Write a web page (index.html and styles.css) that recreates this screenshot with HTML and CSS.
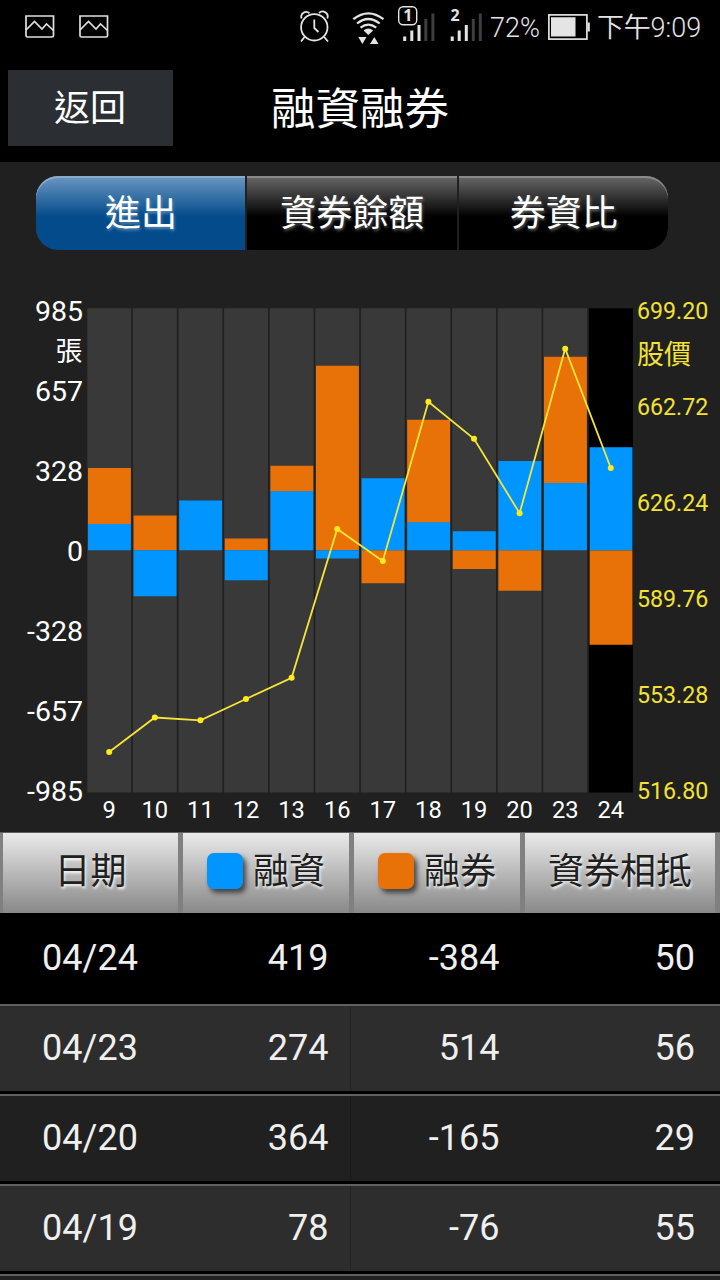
FILE: index.html
```html
<!DOCTYPE html>
<html lang="zh-Hant">
<head>
<meta charset="utf-8">
<title>融資融券</title>
<link rel="stylesheet" href="styles.css">
</head>
<body>
<div class="screen">
  <div class="status">
    <svg class="pics" width="84" height="26" viewBox="0 0 84 26" fill="none" stroke="#e0e0e0" stroke-width="1.700">
      <g id="pic"><path d="M1 1H28.500V20.500Q28.500 22 27 22H2.500Q1 22 1 20.500Z"/><path d="M1 15L9.500 6.500L17 14L21.500 9L28.500 15.500"/></g>
      <use href="#pic" x="54"/>
    </svg>
    <svg class="signals" width="186" height="54" viewBox="298 0 186 54">
      <g fill="none" stroke="#e4e4e4" stroke-width="1.800">
        <circle cx="314.300" cy="27.300" r="13.200"/>
        <path d="M314.300 19.500V28L318.500 32M304.500 37L301 41.500M324.200 37L328 41.500"/>
        <path d="M301.500 18.500A5 5 0 0 1 309.500 13.200M327.300 18.500A5 5 0 0 0 319 13.200" />
        <g stroke-width="2.200"><path d="M353.300 19.200Q368.300 7.400 383.500 19.200M357 23.500Q368.300 14.500 379.700 23.500M360.500 27.700Q368.300 21.500 376.200 27.700"/></g>
        <rect x="398.700" y="6.700" width="18" height="18" rx="4.500" stroke-width="1.400"/>
      </g>
      <g fill="#e4e4e4">
        <path d="M363.500 30.500Q368.300 26.500 373.200 30.500L368.300 35ZM358.300 37H366.500L362.400 44ZM370 44H378.500L374.300 37Z"/>
        <path d="M403.200 36.500h3v4.500h-3zM410.300 30.500h3V41h-3zM417.500 25h3V41h-3zM450.700 36.500h3v4.500h-3zM457.700 30.500h3V41h-3zM464.800 25h3V41h-3z"/>
        <path fill="#3e3e3e" d="M424.300 19h3V41h-3zM431.400 13.500h3V41h-3zM471.800 19h3V41h-3zM478.800 13.500h3V41h-3z"/>
        <text class="sim" x="407.800" y="21">1</text>
        <text class="sim" x="455" y="21">2</text>
      </g>
    </svg>
    <span class="percent">72%</span>
    <svg class="battery" width="42" height="26" viewBox="0 0 42 26"><rect x=".9" y=".9" width="38" height="24.200" fill="none" stroke="#e4e4e4" stroke-width="1.700"/><path d="M3 3.200H27.500V22.500H3ZM39.500 8.500h2.300v9h-2.300z" fill="#e4e4e4"/></svg>
    <span class="clock"><span class="ampm">下午</span>9:09</span>
  </div>

  <div class="titlebar">
    <div class="back">返回</div>
    <div class="title">融資融券</div>
  </div>

  <div class="tabs">
    <div class="tab active">進出</div>
    <div class="tab">資券餘額</div>
    <div class="tab">券資比</div>
  </div>

  <svg class="chart" width="720" height="582" viewBox="0 250 720 582">
    <g fill="#393939">
      <path d="M87.300 308.300h43.900V792.500h-43.900zM132.900 308.300h43.900V792.500h-43.900zM178.500 308.300h43.900V792.500h-43.900zM224.100 308.300h43.900V792.500h-43.900zM269.700 308.300h43.900V792.500h-43.900zM315.300 308.300h43.900V792.500h-43.900zM360.900 308.300h43.900V792.500h-43.900zM406.500 308.300h43.900V792.500h-43.900zM452.100 308.300h43.900V792.500h-43.900zM497.700 308.300h43.900V792.500h-43.900zM543.300 308.300h43.900V792.500h-43.900z"/>
      <rect x="588.900" y="308.300" width="44" height="484.200" fill="#000"/>
    </g>
    <g fill="#e87208">
      <path d="M88 468h42.900v56h-42.900zM133.600 515.500h42.900v34.800h-42.900zM224.800 538.500h42.900v11.800h-42.900zM270.400 465.800h42.900v26h-42.900zM316 365.700h42.900v184.600h-42.900zM361.600 550.300h42.900v33h-42.900zM407.200 419.700h42.900v103h-42.900zM452.800 550.300h42.900v18.700h-42.900zM498.400 550.300h42.900v40.500h-42.900zM544 356.700h42.900v127h-42.900zM589.600 550.300h42.900v94.400h-42.900z"/>
    </g>
    <g fill="#0196ff">
      <path d="M88 523.900h42.900v26.400h-42.900zM133.600 550.300h42.900v46h-42.900zM179.200 500.600h42.900v49.700h-42.900zM224.800 550.300h42.900v30h-42.900zM270.400 491.200h42.900v59.100h-42.900zM316 550.300h42.900v8.200h-42.900zM361.600 478.200h42.900v72.100h-42.900zM407.200 522.300h42.900v28h-42.900zM452.800 531.200h42.900v19.100h-42.900zM498.400 460.900h42.900v89.400h-42.900zM544 483h42.900v67.300h-42.900zM589.600 447.300h42.900v103h-42.900z"/>
    </g>
    <path class="price" d="M109.200 752L154.800 717.500L200.400 720.300L246 699L291.600 677.800L337.200 529L382.800 561L428.400 401.700L474 438.800L519.600 513.200L565.200 348.700L610.800 468"/>
    <g fill="#ffea1c">
      <circle cx="109.200" cy="752" r="3"/><circle cx="154.800" cy="717.500" r="3"/><circle cx="200.400" cy="720.300" r="3"/><circle cx="246" cy="699" r="3"/><circle cx="291.600" cy="677.800" r="3"/><circle cx="337.200" cy="529" r="3"/><circle cx="382.800" cy="561" r="3"/><circle cx="428.400" cy="401.700" r="3"/><circle cx="474" cy="438.800" r="3"/><circle cx="519.600" cy="513.200" r="3"/><circle cx="565.200" cy="348.700" r="3"/><circle cx="610.800" cy="468" r="3"/>
    </g>
    <g class="axis-left">
      <text x="83" y="320.500">985</text><text class="unit" x="82.500" y="361">張</text><text x="83" y="400.700">657</text><text x="83" y="480.700">328</text><text x="83" y="560.700">0</text><text x="83" y="641.300">-328</text><text x="83" y="721.300">-657</text><text x="83" y="801.300">-985</text>
    </g>
    <g class="axis-right">
      <text x="637" y="318.500">699.20</text><text class="unit" x="637" y="364">股價</text><text x="637" y="414.500">662.72</text><text x="637" y="510.500">626.24</text><text x="637" y="607">589.76</text><text x="637" y="703.300">553.28</text><text x="637" y="799.300">516.80</text>
    </g>
    <g class="axis-days">
      <text x="109.200" y="818">9</text><text x="154.800" y="818">10</text><text x="200.400" y="818">11</text><text x="246" y="818">12</text><text x="291.600" y="818">13</text><text x="337.200" y="818">16</text><text x="382.800" y="818">17</text><text x="428.400" y="818">18</text><text x="474" y="818">19</text><text x="519.600" y="818">20</text><text x="565.200" y="818">23</text><text x="610.800" y="818">24</text>
    </g>
  </svg>

  <div class="thead">
    <div class="th">日期</div>
    <div class="th"><i class="swatch blue"></i>融資</div>
    <div class="th"><i class="swatch orange"></i>融券</div>
    <div class="th">資券相抵</div>
  </div>
  <div class="row first"><span>04/24</span><span>419</span><span>-384</span><span>50</span></div>
  <div class="row odd"><span>04/23</span><span>274</span><span>514</span><span>56</span></div>
  <div class="row"><span>04/20</span><span>364</span><span>-165</span><span>29</span></div>
  <div class="row odd"><span>04/19</span><span>78</span><span>-76</span><span>55</span></div>
  <div class="row"></div>
</div>
</body>
</html>
```
FILE: styles.css
```css
* { box-sizing: border-box; }
body { margin: 0; background: #202020; }
.screen {
  width: 720px;
  height: 1280px;
  overflow: hidden;
  background: #202020;
  color: #fff;
  font-family: Roboto, "Noto Sans CJK TC", sans-serif;
}
svg { display: block; flex: none; }
.status {
  display: flex;
  align-items: flex-start;
  height: 54px;
  background: #000;
  color: #e4e4e4;
  font-size: 27px;
  line-height: 56px;
  white-space: nowrap;
}
.pics { margin: 15px 0 0 25px; }
.signals { margin-left: 189px; }
.sim { font: 700 16px "Noto Sans", sans-serif; text-anchor: middle; }
.percent { width: 58px; margin-left: 6px; font-weight: 350; letter-spacing: 0; }
.battery { margin: 14px 0 0 0; }
.clock { display: flex; margin-left: 7px; font-weight: 350; letter-spacing: 0; }
.ampm { letter-spacing: -0.2px; }
.titlebar {
  display: grid;
  grid-template-columns: 165px 1fr 165px;
  height: 108px;
  padding: 16px 7.500px;
  background: #000;
}
.back {
  height: 76px;
  background: #2b2f33;
  font-size: 36px;
  line-height: 78px;
  text-align: center;
}
.title { font-size: 44.500px; line-height: 80px; text-align: center; }
.tabs {
  display: grid;
  grid-template-columns: 209px 209.5px 209.5px;
  gap: 2px;
  width: 632px;
  height: 88px;
  margin-left: 36px;
  padding-top: 14px;
}
.tab {
  height: 74px;
  background: linear-gradient(#696969, #000 55%);
  box-shadow: inset 0 2px 0 #8a8a8a;
  font-size: 36px;
  line-height: 76px;
  text-align: center;
  text-indent: 1px;
  text-shadow: 1px 2px 3px rgba(255, 255, 255, .35);
}
.tab.active {
  border-radius: 22px 0 0 22px;
  background: linear-gradient(#6b97c2, #044b8b 55%);
  box-shadow: inset 0 2px 0 #8aaccb;
}
.tab:last-child { border-radius: 0 22px 22px 0; }
.chart text { font-family: Roboto, "Noto Sans CJK TC", sans-serif; }
.price { fill: none; stroke: #f5e53b; stroke-width: 1.8; }
.axis-left { fill: #fff; font-size: 28.5px; text-anchor: end; }
.axis-right { fill: #f4e235; font-size: 23.2px; }
.chart .unit { font-size: 27px; }
.axis-days { fill: #fff; font-size: 23.7px; text-anchor: middle; }
.thead {
  display: grid;
  grid-template-columns: 175px 166px 166px 190px;
  column-gap: 5px;
  height: 81px;
  padding-left: 2.5px;
  border-top: 1px solid #606060;
  background: #808080;
  color: #202020;
}
.th {
  display: flex;
  align-items: center;
  justify-content: center;
  gap: 10px;
  padding: 0 0 2px 1px;
  background: linear-gradient(#eaeaea, #888);
  font-size: 36px;
  line-height: 1;
  text-shadow: 1px 2px 3px #fff;
}
.swatch {
  width: 36px;
  height: 36px;
  margin-top: -2px;
  border-radius: 7px;
  box-shadow: 3px 4px 5px #444;
}
.blue { background: #0196ff; }
.orange { background: #e87208; }
.row {
  display: grid;
  grid-template-columns: 180px 171px 171px 198px;
  height: 90px;
  border-top: 2px solid #606060;
  border-bottom: 3px solid #000;
  background: #202020;
  color: #efefef;
  font-size: 36px;
  line-height: 85px;
}
.row span { padding-right: 22.5px; text-align: right; }
.row span:first-child { padding: 0; text-align: center; }
.row span:nth-child(2) { box-shadow: inset -1px 0 0 rgba(0, 0, 0, .18); }
.row span:last-child { padding-right: 25px; }
.row.odd { background: #2d2d2d; }
.row.first { height: 91px; border: 0; background: #000; line-height: 91px; }
```
